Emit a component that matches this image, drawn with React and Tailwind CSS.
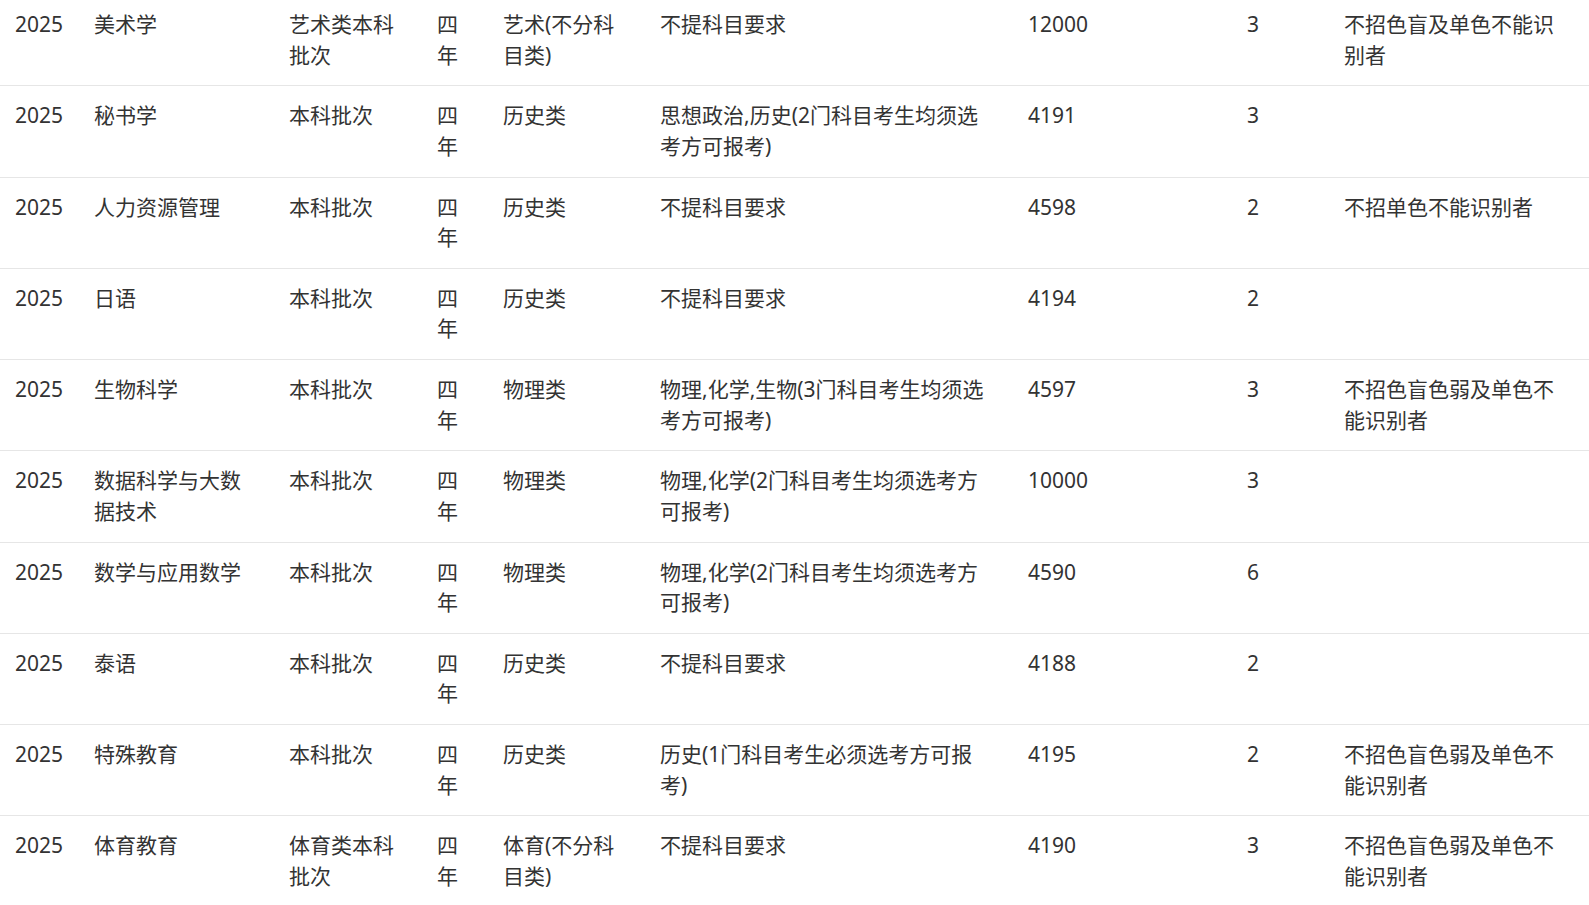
import React from 'react';

const rows = [
  ['2025', '美术学', '艺术类本科批次', '四年', '艺术(不分科目类)', '不提科目要求', '12000', '3', '不招色盲及单色不能识别者'],
  ['2025', '秘书学', '本科批次', '四年', '历史类', '思想政治,历史(2门科目考生均须选考方可报考)', '4191', '3', ''],
  ['2025', '人力资源管理', '本科批次', '四年', '历史类', '不提科目要求', '4598', '2', '不招单色不能识别者'],
  ['2025', '日语', '本科批次', '四年', '历史类', '不提科目要求', '4194', '2', ''],
  ['2025', '生物科学', '本科批次', '四年', '物理类', '物理,化学,生物(3门科目考生均须选考方可报考)', '4597', '3', '不招色盲色弱及单色不能识别者'],
  ['2025', '数据科学与大数据技术', '本科批次', '四年', '物理类', '物理,化学(2门科目考生均须选考方可报考)', '10000', '3', ''],
  ['2025', '数学与应用数学', '本科批次', '四年', '物理类', '物理,化学(2门科目考生均须选考方可报考)', '4590', '6', ''],
  ['2025', '泰语', '本科批次', '四年', '历史类', '不提科目要求', '4188', '2', ''],
  ['2025', '特殊教育', '本科批次', '四年', '历史类', '历史(1门科目考生必须选考方可报考)', '4195', '2', '不招色盲色弱及单色不能识别者'],
  ['2025', '体育教育', '体育类本科批次', '四年', '体育(不分科目类)', '不提科目要求', '4190', '3', '不招色盲色弱及单色不能识别者'],
];

// outer cell width, inner text width
const cols = [
  ['w-[78px] pl-[15px]', 'w-[56px]'],
  ['w-[195px] pl-[16px]', 'w-[155px]'],
  ['w-[148px] pl-[16px]', 'w-[115px]'],
  ['w-[66px] pl-[16px]', 'w-[30px]'],
  ['w-[157px] pl-[16px]', 'w-[120px]'],
  ['w-[368px] pl-[16px]', 'w-[326px]'],
  ['w-[219px] pl-[16px]', 'w-[180px]'],
  ['w-[97px] pl-[16px]', 'w-[60px]'],
  ['w-[245px] pl-[16px]', 'w-[220px]'],
];

export default function App() {
  return (
    <div
      className="bg-white w-full h-[905px] overflow-hidden text-[#333] text-[21px] leading-[30.5px]"
      style={{ fontFamily: '"Noto Sans", "Noto Sans CJK SC", sans-serif' }}
    >
      <div className="-mt-[5px]">
        {rows.map((r, i) => (
          <div key={i} className="flex border-b border-[#e6e6e6] h-[91.25px]">
            {r.map((c, j) => (
              <div key={j} className={`${cols[j][0]} pt-[14px] shrink-0`}>
                <div className={`${cols[j][1]} break-all`}>{c}</div>
              </div>
            ))}
          </div>
        ))}
      </div>
    </div>
  );
}
